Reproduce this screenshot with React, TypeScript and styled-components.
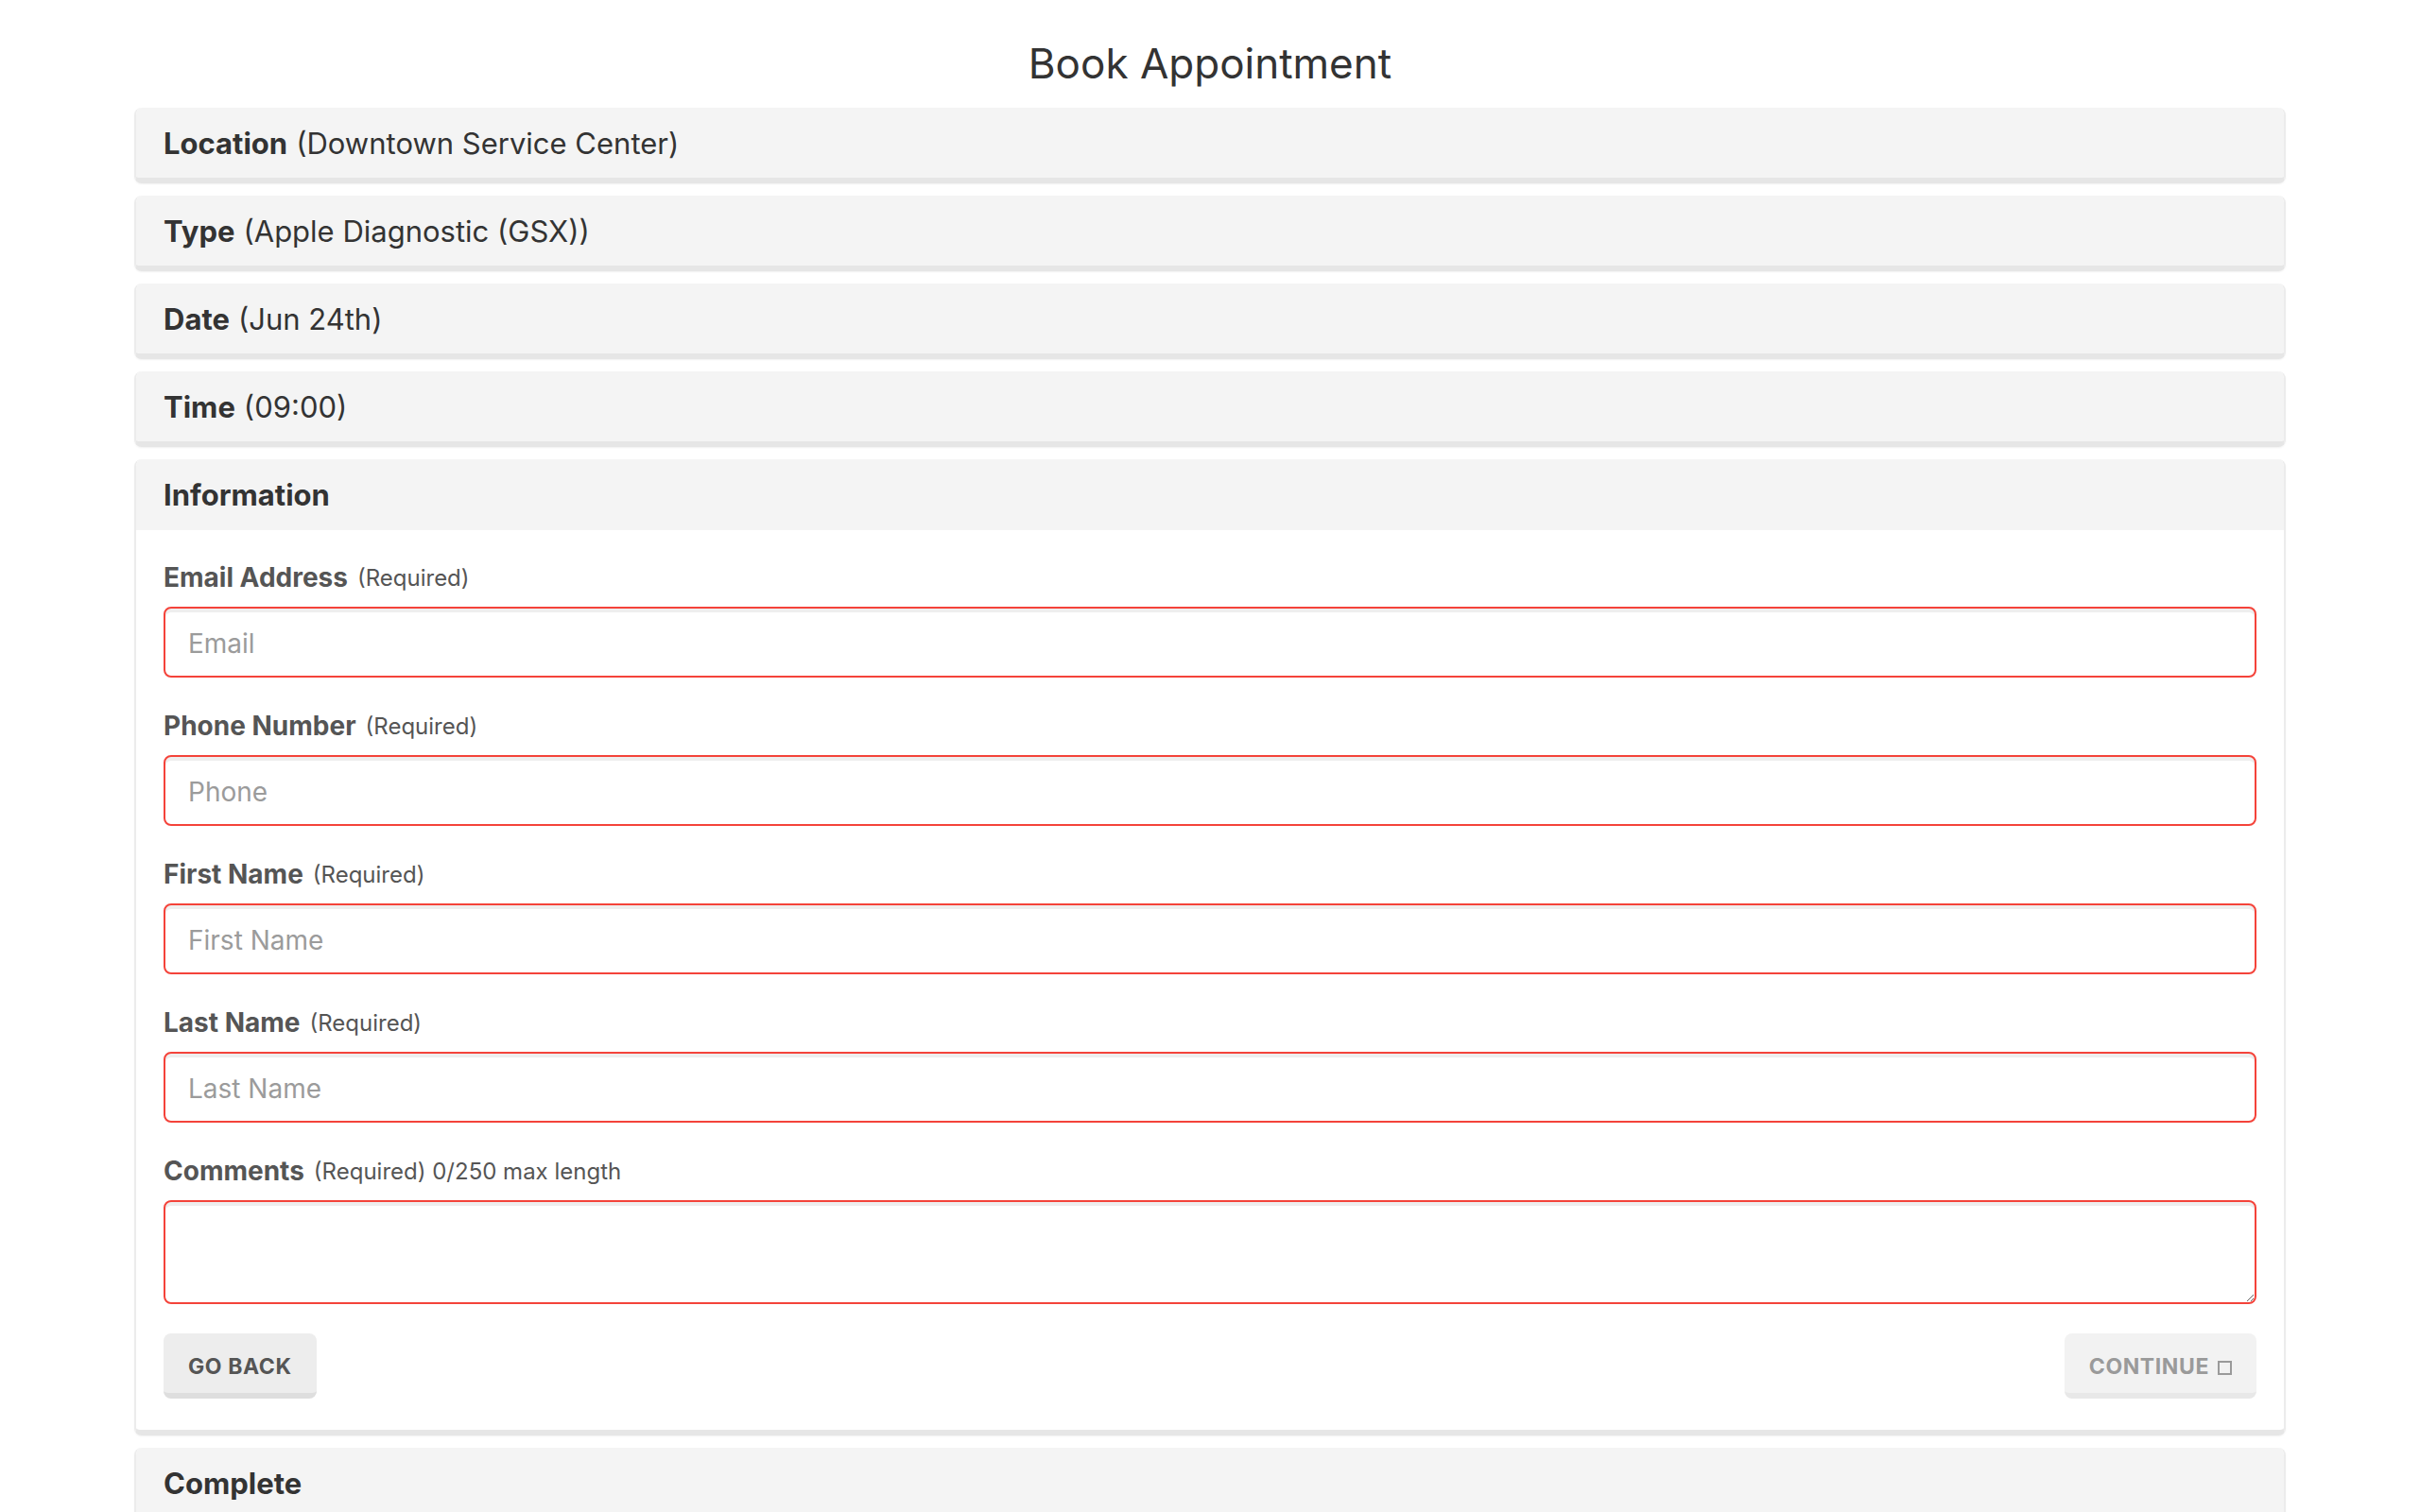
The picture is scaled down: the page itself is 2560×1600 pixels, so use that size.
import React from 'react'
import styled, { createGlobalStyle } from 'styled-components'

const GlobalStyle = createGlobalStyle`
  body {
    margin: 0;
    background: #fff;
    font-family: Inter, "Noto Sans", sans-serif;
    color: #333;
  }
`

const Page = styled.div`
  padding: 0 142px;
`

const Title = styled.h1`
  margin: 0;
  height: 114px;
  display: flex;
  align-items: center;
  justify-content: center;
  padding-top: 20px;
  box-sizing: border-box;
  font-size: 44px;
  font-weight: 400;
  color: #333;
`

const Steps = styled.div`
  display: flex;
  flex-direction: column;
  gap: 13px;
`

const Card = styled.section`
  border-radius: 8px;
  background: #fff;
  border: 2px solid #ececec;
  border-top: none;
  border-bottom: 6px solid #e6e6e6;
  overflow: hidden;
  box-shadow: 0 1px 2px rgba(0, 0, 0, 0.06);
`

const CardHeader = styled.div<{ $tall?: boolean }>`
  height: ${p => (p.$tall ? 75 : 74)}px;
  display: flex;
  align-items: center;
  padding: 0 29px;
  background: #f4f4f4;
  font-size: 31px;
  color: #333;

  b {
    font-weight: 700;
    margin-right: 9px;
  }
`

const CardBody = styled.div`
  padding: 33px 29px 33px;
  display: flex;
  flex-direction: column;
`

const Field = styled.div`
  display: flex;
  flex-direction: column;
  margin-bottom: 34px;
`

const Label = styled.label`
  height: 34px;
  display: flex;
  align-items: center;
  margin-bottom: 14px;
  font-size: 28px;
  font-weight: 700;
  color: #555;

  span {
    font-size: 24px;
    font-weight: 400;
    margin-left: 10px;
  }
`

const Input = styled.input`
  height: 75px;
  box-sizing: border-box;
  border: 2px solid #f4433a;
  border-radius: 8px;
  box-shadow: inset 0 4px 0 #eeeeee;
  padding: 2px 24px 0;
  font-family: inherit;
  font-size: 28px;
  color: #333;
  outline: none;

  &::placeholder {
    color: #9b9b9b;
  }
`

const TextArea = styled.textarea`
  height: 110px;
  box-sizing: border-box;
  border: 2px solid #f4433a;
  border-radius: 8px;
  box-shadow: inset 0 4px 0 #eeeeee;
  padding: 14px 24px;
  font-family: inherit;
  font-size: 28px;
  outline: none;
  resize: vertical;
`

const Actions = styled.div`
  display: flex;
  justify-content: space-between;
  margin-top: -3px;
`

const Button = styled.button<{ $disabled?: boolean }>`
  height: 69px;
  box-sizing: border-box;
  padding: 6px 26px 0;
  border: none;
  border-radius: 8px;
  border-bottom: 6px solid ${p => (p.$disabled ? '#e8e8e8' : '#dedede')};
  background: ${p => (p.$disabled ? '#f2f2f2' : '#ededed')};
  color: ${p => (p.$disabled ? '#9a9a9a' : '#555')};
  font-family: inherit;
  font-size: 23px;
  font-weight: 700;
  letter-spacing: 0.6px;
  text-transform: uppercase;
  display: flex;
  align-items: center;
  gap: 9px;
`

const MissingGlyph = styled.span`
  width: 15px;
  height: 15px;
  border: 2px solid #9a9a9a;
  box-sizing: border-box;
  margin-top: 4px;
`

const fields = [
  { label: 'Email Address', placeholder: 'Email' },
  { label: 'Phone Number', placeholder: 'Phone' },
  { label: 'First Name', placeholder: 'First Name' },
  { label: 'Last Name', placeholder: 'Last Name' },
]

const done = [
  { name: 'Location', value: 'Downtown Service Center' },
  { name: 'Type', value: 'Apple Diagnostic (GSX)' },
  { name: 'Date', value: 'Jun 24th' },
  { name: 'Time', value: '09:00' },
]

export default function App() {
  return (
    <Page>
      <GlobalStyle />
      <Title>Book Appointment</Title>
      <Steps>
        {done.map(step => (
          <Card key={step.name}>
            <CardHeader>
              <b>{step.name}</b>({step.value})
            </CardHeader>
          </Card>
        ))}

        <Card>
          <CardHeader $tall>
            <b>Information</b>
          </CardHeader>
          <CardBody>
            {fields.map(f => (
              <Field key={f.label}>
                <Label>
                  {f.label}
                  <span>(Required)</span>
                </Label>
                <Input placeholder={f.placeholder} />
              </Field>
            ))}
            <Field>
              <Label>
                Comments
                <span>(Required) 0/250 max length</span>
              </Label>
              <TextArea />
            </Field>
            <Actions>
              <Button>Go Back</Button>
              <Button $disabled>
                Continue <MissingGlyph />
              </Button>
            </Actions>
          </CardBody>
        </Card>

        <Card>
          <CardHeader>
            <b>Complete</b>
          </CardHeader>
        </Card>
      </Steps>
    </Page>
  )
}
